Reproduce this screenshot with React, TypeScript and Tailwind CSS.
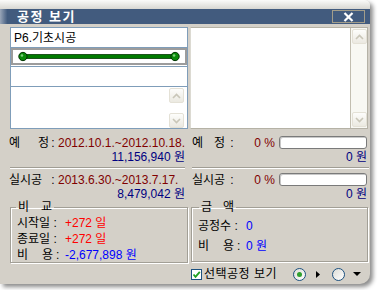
import React from "react";

const font = "font-['Liberation_Sans','Noto_Sans_CJK_KR',sans-serif]";

function ScrollBtn({ dir }: { dir: "up" | "down" }) {
  return (
    <div className="w-[15px] h-[15px] rounded-[2px] border border-[#e4e1d6] bg-gradient-to-b from-[#fdfdfb] to-[#ebe9e1] flex items-center justify-center">
      <svg width="9" height="6" viewBox="0 0 9 6">
        {dir === "up" ? (
          <path d="M1 5 L4.5 1.5 L8 5" fill="none" stroke="#c9c6b8" strokeWidth="1.6" />
        ) : (
          <path d="M1 1 L4.5 4.5 L8 1" fill="none" stroke="#c9c6b8" strokeWidth="1.6" />
        )}
      </svg>
    </div>
  );
}

function Label2({ a, b, w }: { a: string; b: string; w: string }) {
  return (
    <span className={`flex justify-between shrink-0 ${w}`}>
      <span>{a}</span>
      <span>{b}</span>
    </span>
  );
}

function Bar() {
  return <div className="w-[88px] h-[13px] shrink-0 rounded-[3px] border border-[#7a7a7a] bg-white shadow-[inset_1px_1px_0_#c8c8c8]" />;
}

export default function App() {
  return (
    <div className={`w-[378px] h-[290px] bg-white overflow-hidden text-[12px] leading-[14px] text-black ${font}`}>
      <div className="w-[370px] h-[284px] bg-[#d4d0c8] rounded-tr-[5px] rounded-br-[10px] shadow-[3px_3px_4px_rgba(0,0,0,0.45)] flex flex-col">
        {/* frame top */}
        <div className="h-[9px] rounded-tr-[5px] bg-gradient-to-b from-[#fbfbfa] to-[#d8d7d2]" />

        {/* title bar */}
        <div className="h-[15px] flex items-center justify-between bg-gradient-to-r from-[#9aa6b8] via-[#425b7e] via-[2%] to-[#425b7e]">
          <span className="pl-[17px] text-white font-bold text-[13px] leading-[15px] tracking-[1.5px]">공정 보기</span>
          <div className="mr-[5px] w-[33px] h-[13px] border border-[#a29d8a] flex items-center justify-center">
            <svg width="11" height="10" viewBox="0 0 11 10">
              <path d="M1.5 1 L9.5 9 M9.5 1 L1.5 9" stroke="#fff" strokeWidth="2.2" />
            </svg>
          </div>
        </div>

        {/* list panels */}
        <div className="flex gap-[2px] pl-[10px] pt-[3px]">
          <div className="w-[178px] h-[102px] border border-[#7f9db9] bg-white flex flex-col">
            <div className="h-[20px] border-b border-[#7f9db9] px-[3px] flex items-center">P6.기초시공</div>
            <div className="h-[17px] border-2 border-[#9c9c9c] flex items-center px-[5px]">
              <svg width="164" height="11" viewBox="0 0 164 11">
                <rect x="4" y="3.5" width="156" height="4" fill="#007a00" stroke="#003800" strokeWidth="0.8" />
                <circle cx="5" cy="5.5" r="4.2" fill="#0a8a0a" stroke="#003000" strokeWidth="1" />
                <circle cx="4" cy="4.5" r="1.3" fill="#7ed07e" />
                <circle cx="159" cy="5.5" r="4.2" fill="#0a8a0a" stroke="#003000" strokeWidth="1" />
                <circle cx="158" cy="4.5" r="1.3" fill="#7ed07e" />
              </svg>
            </div>
            <div className="h-[21px] border-y border-[#7f9db9] mt-[1px]" />
            <div className="flex-1 flex justify-end pr-[3px]">
              <div className="flex flex-col justify-between pt-[1px]">
                <ScrollBtn dir="up" />
                <ScrollBtn dir="down" />
              </div>
            </div>
          </div>
          <div className="w-[178px] h-[102px] border border-[#b5b2a6] border-l-[#dcdad2] bg-white flex">
            <div className="flex-1" />
            <div className="w-[17px] border-l border-[#c2beb0] bg-[#f8f8f3] flex flex-col justify-between items-center py-[1px]">
              <ScrollBtn dir="up" />
              <ScrollBtn dir="down" />
            </div>
          </div>
        </div>

        {/* info */}
        <div className="flex mt-[6px]">
          <div className="w-[176px] shrink-0 ml-[9px] flex flex-col">
            <div className="h-[15px] flex items-center whitespace-nowrap">
              <Label2 a="예" b="정" w="w-[40px]" />
              <span className="w-[8px] shrink-0 text-center">:</span>
              <span className="ml-[1px] text-[#800000]">2012.10.1.~2012.10.18.</span>
            </div>
            <div className="h-[14px] text-right text-[#000080]">11,156,940 원</div>
            <div className="mt-[3px] ml-[1px] h-[2px] border-t border-[#a09d94] border-b border-b-white" />
            <div className="h-[15px] flex items-center mt-[3px] whitespace-nowrap">
              <span className="w-[40px] shrink-0">실시공</span>
              <span className="w-[8px] shrink-0 text-center">:</span>
              <span className="ml-[1px] text-[#800000]">2013.6.30.~2013.7.17.</span>
            </div>
            <div className="h-[14px] text-right text-[#000080]">8,479,042 원</div>
          </div>
          <div className="w-[177px] shrink-0 ml-[7px] flex flex-col">
            <div className="h-[15px] flex items-center">
              <span className="w-[36px] shrink-0">
                <Label2 a="예" b="정" w="w-[33px]" />
              </span>
              <span className="w-[8px] shrink-0 text-center">:</span>
              <span className="w-[43px] shrink-0 text-right text-[#800000] pr-[4px]">0 %</span>
              <Bar />
            </div>
            <div className="h-[14px] text-right text-[#000080] pr-[2px]">0 원</div>
            <div className="mt-[3px] h-[2px] border-t border-[#a09d94] border-b border-b-white" />
            <div className="h-[15px] flex items-center mt-[3px]">
              <span className="w-[36px] shrink-0">실시공</span>
              <span className="w-[8px] shrink-0 text-center">:</span>
              <span className="w-[43px] shrink-0 text-right text-[#800000] pr-[4px]">0 %</span>
              <Bar />
            </div>
            <div className="h-[14px] text-right text-[#000080] pr-[2px]">0 원</div>
          </div>
        </div>

        {/* group boxes */}
        <div className="flex mt-[-1px]">
          <fieldset className="ml-[10px] w-[178px] h-[63px] border border-[#a29f96] shadow-[inset_1px_1px_0_#fff,1px_1px_0_#fff] px-[6px]">
            <legend className="px-[2px] ml-[-1px]">
              <Label2 a="비" b="교" w="w-[34px]" />
            </legend>
            <div className="flex flex-col leading-[16px] mt-[1px]">
              <div className="flex">
                <span className="w-[48px]">시작일 :</span>
                <span className="text-[#ff0000]">+272 일</span>
              </div>
              <div className="flex">
                <span className="w-[48px]">종료일 :</span>
                <span className="text-[#ff0000]">+272 일</span>
              </div>
              <div className="flex">
                <span className="w-[48px] flex">
                  <Label2 a="비" b="용" w="w-[36px]" />
                  <span className="ml-[3px]">:</span>
                </span>
                <span className="text-[#0000ff]">-2,677,898 원</span>
              </div>
            </div>
          </fieldset>
          <fieldset className="ml-[3px] w-[177px] h-[62px] border border-[#a29f96] shadow-[inset_1px_1px_0_#fff,1px_1px_0_#fff] px-[6px]">
            <legend className="px-[2px] ml-[1px]">
              <Label2 a="금" b="액" w="w-[33px]" />
            </legend>
            <div className="flex flex-col gap-[6px] mt-[5px]">
              <div className="flex">
                <span className="w-[48px]">공정수 :</span>
                <span className="text-[#0000ff]">0</span>
              </div>
              <div className="flex">
                <span className="w-[48px] flex">
                  <Label2 a="비" b="용" w="w-[36px]" />
                  <span className="ml-[3px]">:</span>
                </span>
                <span className="text-[#0000ff]">0 원</span>
              </div>
            </div>
          </fieldset>
        </div>

        {/* bottom row */}
        <div className="flex items-center ml-[191px] mt-[4px] h-[14px]">
          <div className="w-[11px] h-[11px] shrink-0 border border-[#1c5180] bg-white flex items-center justify-center">
            <svg width="9" height="9" viewBox="0 0 9 9">
              <path d="M1.5 4.5 L3.5 6.8 L7.8 1.8" fill="none" stroke="#21a121" strokeWidth="1.8" />
            </svg>
          </div>
          <span className="ml-[2px] w-[89px] shrink-0 tracking-[0.5px]">선택공정 보기</span>
          <div className="w-[13px] h-[13px] shrink-0 rounded-full border border-[#1c5180] bg-gradient-to-br from-[#dcdcd6] to-white flex items-center justify-center">
            <div className="w-[5px] h-[5px] rounded-full bg-[#2fa02f]" />
          </div>
          <svg className="ml-[10px]" width="4" height="7" viewBox="0 0 4 7">
            <path d="M0 0 L4 3.5 L0 7 Z" fill="#000" />
          </svg>
          <div className="ml-[12px] w-[13px] h-[13px] shrink-0 rounded-full border border-[#1c5180] bg-gradient-to-br from-[#dcdcd6] to-white" />
          <svg className="ml-[8px]" width="8" height="4" viewBox="0 0 8 4">
            <path d="M0 0 L8 0 L4 4 Z" fill="#000" />
          </svg>
        </div>
      </div>
    </div>
  );
}
